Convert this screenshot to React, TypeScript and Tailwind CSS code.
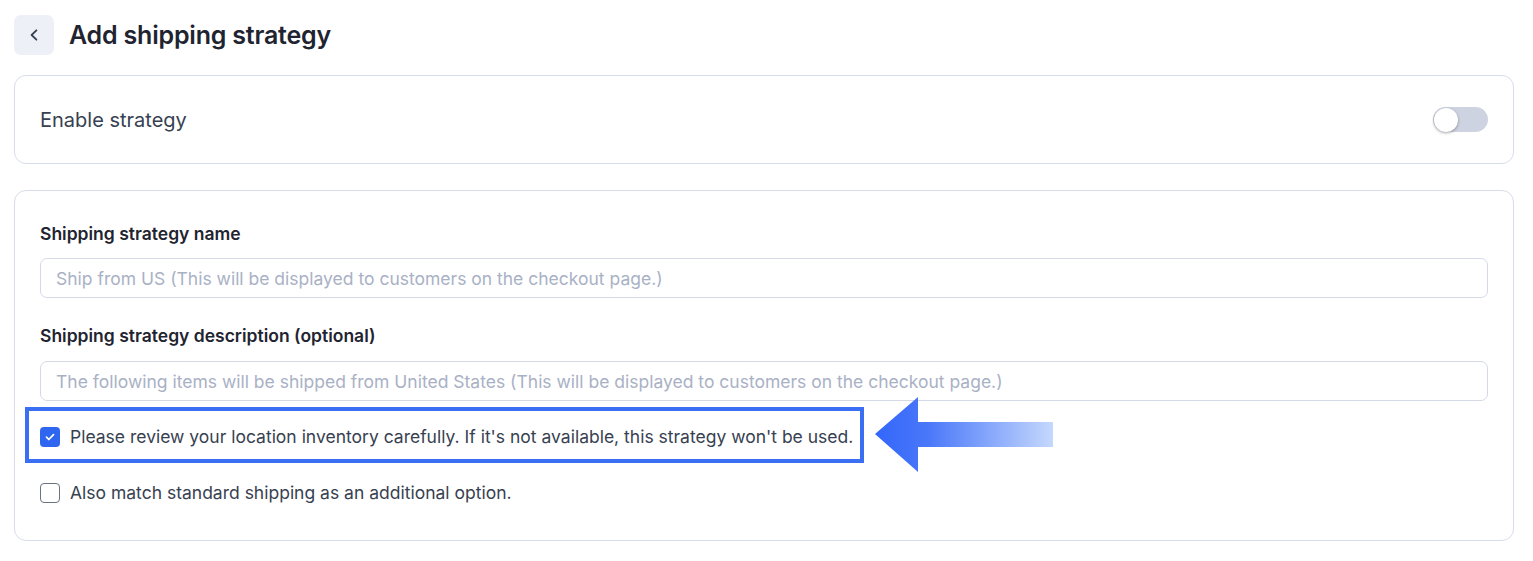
import React, { useState } from 'react';

const font = { fontFamily: 'Inter, "Noto Sans", sans-serif' };

function Toggle({ on, onChange }: { on: boolean; onChange: () => void }) {
  return (
    <button
      onClick={onChange}
      className={`relative h-[25px] w-[55px] rounded-full ${on ? 'bg-[#3a6ff3]' : 'bg-[#cdd3e0]'}`}
    >
      <span
        className={`absolute top-[0.5px] h-[24px] w-[24px] rounded-full bg-white shadow-[0_1px_3px_rgba(0,0,0,0.35)] ${on ? 'left-[31px]' : 'left-[0.5px]'}`}
      />
    </button>
  );
}

function Checkbox({ checked, onChange }: { checked: boolean; onChange: () => void }) {
  return (
    <button
      onClick={onChange}
      className={`flex h-[20px] w-[20px] shrink-0 items-center justify-center rounded-[4px] ${
        checked ? 'bg-[#2f66f0]' : 'border-[1.5px] border-[#6b7280] bg-white'
      }`}
    >
      {checked && (
        <svg width="12" height="12" viewBox="0 0 12 12" fill="none">
          <path d="M2.5 6.2l2.3 2.3 4.7-4.9" stroke="white" strokeWidth="1.7" strokeLinecap="round" strokeLinejoin="round" />
        </svg>
      )}
    </button>
  );
}

export default function App() {
  const [enabled, setEnabled] = useState(false);
  const [review, setReview] = useState(true);
  const [standard, setStandard] = useState(false);

  return (
    <div className="min-h-[561px] bg-white pl-[14px] pr-[19px] pt-[15px] text-[#2a2f3a]" style={font}>
      {/* Header */}
      <div className="flex items-center gap-[15px]">
        <button className="flex h-[40px] w-[40px] items-center justify-center rounded-[7px] bg-[#eef0f7]">
          <svg width="14" height="14" viewBox="0 0 14 14" fill="none">
            <path d="M9.4 2.3L4.6 7l4.8 4.7" stroke="#374151" strokeWidth="1.8" strokeLinecap="round" strokeLinejoin="round" />
          </svg>
        </button>
        <h1 className="text-[25px] font-semibold leading-[32px] tracking-[-0.2px] text-[#1f2430]">Add shipping strategy</h1>
      </div>

      {/* Enable card */}
      <div className="mt-[20px] flex h-[89px] items-center justify-between rounded-[12px] border border-[#d9dcea] px-[25px]">
        <span className="text-[20px] leading-[28px] text-[#374151]">Enable strategy</span>
        <Toggle on={enabled} onChange={() => setEnabled(!enabled)} />
      </div>

      {/* Form card */}
      <div className="mt-[26px] rounded-[12px] border border-[#d9dcea] px-[25px] pb-[34px] pt-[31px]">
        <label className="block text-[17.5px] font-semibold leading-[24px] text-[#1f2430]">Shipping strategy name</label>
        <input
          className="mt-[12px] h-[40px] w-full rounded-[7px] border border-[#d5d9e6] px-[15px] text-[17.5px] text-[#1f2430] outline-none placeholder:text-[#a9b1c5]"
          placeholder="Ship from US (This will be displayed to customers on the checkout page.)"
        />

        <label className="mt-[26px] block text-[17.5px] font-semibold leading-[24px] text-[#1f2430]">
          Shipping strategy description (optional)
        </label>
        <input
          className="mt-[13px] h-[40px] w-full rounded-[7px] border border-[#d5d9e6] px-[15px] text-[17.5px] text-[#1f2430] outline-none placeholder:text-[#a9b1c5]"
          placeholder="The following items will be shipped from United States (This will be displayed to customers on the checkout page.)"
        />

        <div className="mt-[6px] flex items-center">
          <div className="ml-[-15px] flex items-center gap-[10px] border-4 border-[#3a6ff3] pb-[9px] pl-[11px] pr-[7px] pt-[13px]">
            <Checkbox checked={review} onChange={() => setReview(!review)} />
            <span className="whitespace-nowrap text-[17.5px] leading-[26px] text-[#374151]">
              Please review your location inventory carefully. If it's not available, this strategy won't be used.
            </span>
          </div>
          <svg className="-my-[10px] ml-[11px] shrink-0" width="180" height="76" viewBox="0 0 180 76">
            <defs>
              <linearGradient id="arrowGrad" x1="0" y1="0" x2="1" y2="0">
                <stop offset="0" stopColor="#3366fb" />
                <stop offset="0.3" stopColor="#4a78f9" />
                <stop offset="1" stopColor="#c5d8fd" />
              </linearGradient>
            </defs>
            <path d="M0 37L43 0V25H178V50H43V75Z" fill="url(#arrowGrad)" />
          </svg>
        </div>

        <div className="mt-[17px] flex items-center gap-[10px]">
          <Checkbox checked={standard} onChange={() => setStandard(!standard)} />
          <span className="text-[17.5px] leading-[26px] text-[#374151]">Also match standard shipping as an additional option.</span>
        </div>
      </div>
    </div>
  );
}
